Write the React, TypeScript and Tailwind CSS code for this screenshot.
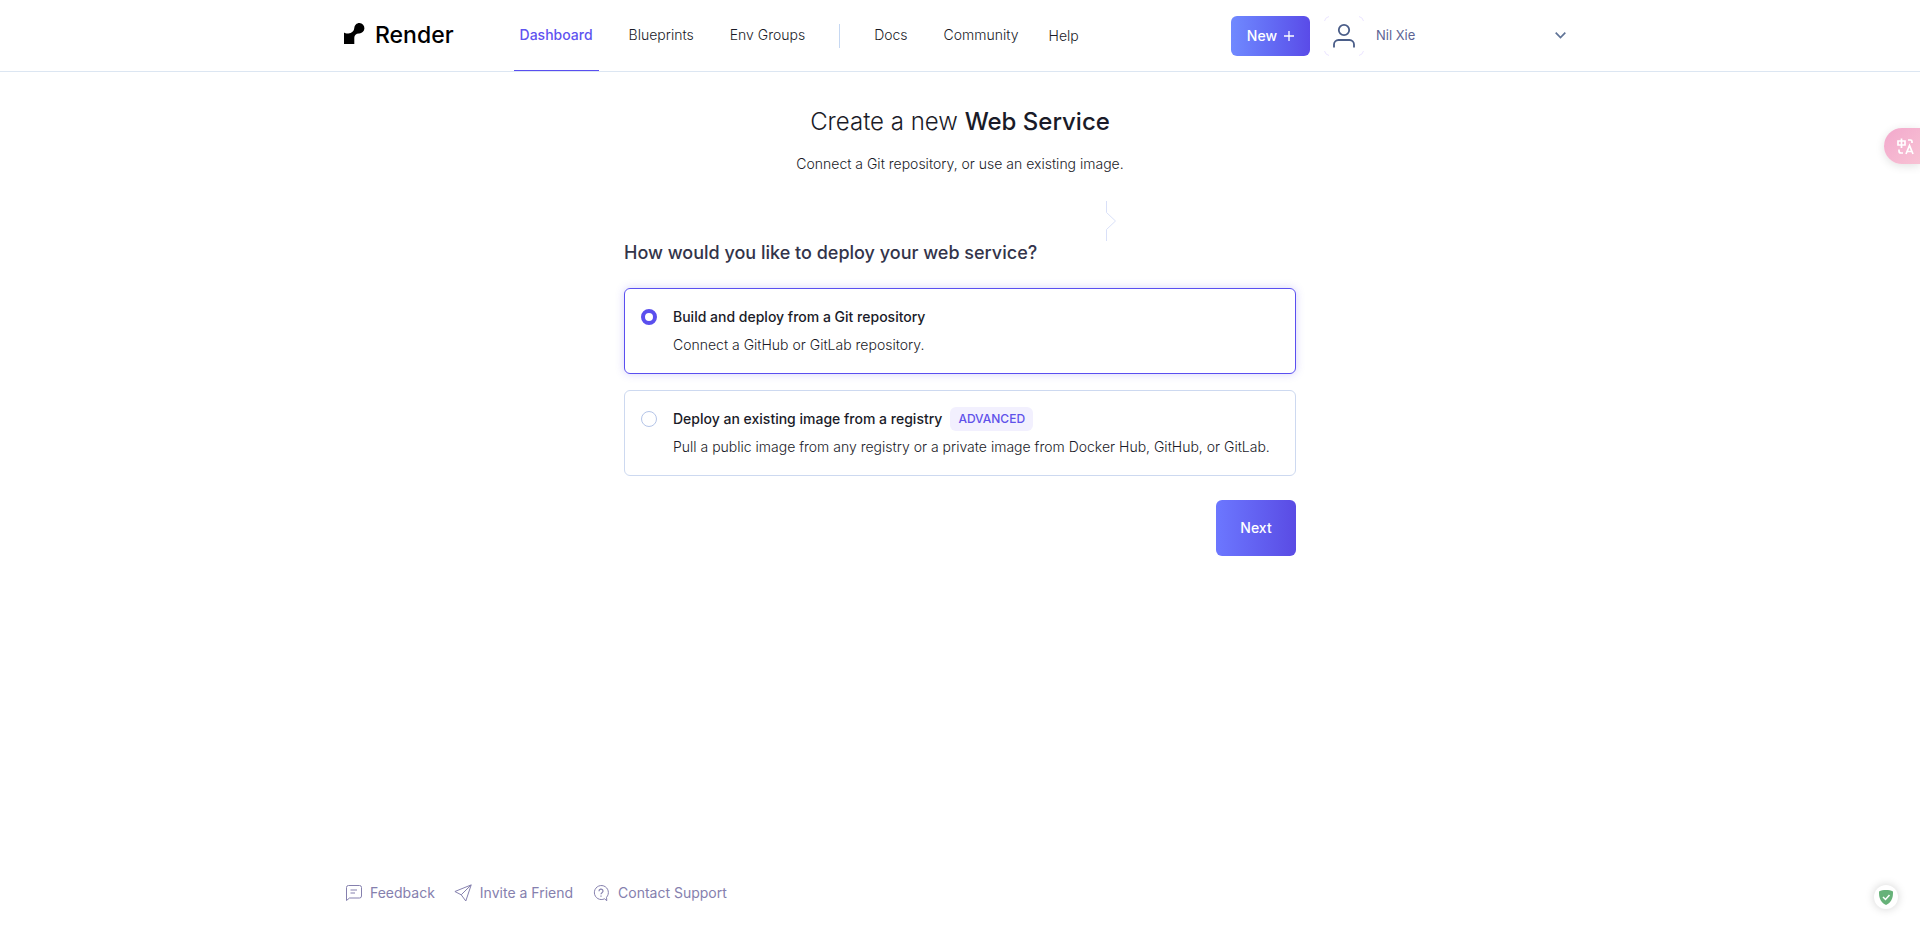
import { useState } from "react";

type Option = {
  id: string;
  title: string;
  detail: string;
  badge?: string;
};

const options: Option[] = [
  {
    id: "git",
    title: "Build and deploy from a Git repository",
    detail: "Connect a GitHub or GitLab repository.",
  },
  {
    id: "image",
    title: "Deploy an existing image from a registry",
    detail:
      "Pull a public image from any registry or a private image from Docker Hub, GitHub, or GitLab.",
    badge: "ADVANCED",
  },
];

function Logo() {
  return (
    <a href="#" className="flex items-center gap-2.5 pb-0.5 text-black">
      <svg className="mb-0.5" width="21" height="21" viewBox="0 0 21 21" fill="currentColor" aria-hidden="true">
        <path d="M15.500 0a5.200 5.200 0 1 1-.6 10.400c-2.800.1-4.600 1.600-4.600 4.300V21H0V9.500c1.200.9 2.500 1.100 4.300 1C7.800 10.300 10 8.200 10.300 5 10.500 2.200 12.600 0 15.500 0z" />
      </svg>
      <span className="text-[23px] leading-8 font-medium">Render</span>
    </a>
  );
}

function NavLink({ label, active }: { label: string; active?: boolean }) {
  return (
    <a
      href="#"
      className={
        active
          ? "flex h-[71px] items-center border-b border-[#5a4ff0] px-1.5 font-medium text-[#5f54f0]"
          : "flex h-[71px] items-center border-b border-transparent px-1.5"
      }
    >
      {label}
    </a>
  );
}

function Header() {
  return (
    <header className="border-b border-[#dce6f2]">
      <div className="mx-auto flex h-[71px] max-w-7xl items-center px-6">
        <Logo />
        <nav className="ml-15 flex items-center gap-6 text-sm font-light">
          <NavLink label="Dashboard" active />
          <NavLink label="Blueprints" />
          <NavLink label="Env Groups" />
          <span className="mx-1 h-6 w-px bg-[#c6d8f2]" />
          <NavLink label="Docs" />
          <NavLink label="Community" />
          <button type="button">Help</button>
        </nav>
        <div className="ml-auto flex items-center">
          <button
            type="button"
            className="flex h-10 items-center gap-[7px] rounded-md bg-linear-to-r from-[#7089ff] via-[#636bf4] to-[#5a4be8] px-4 text-sm font-medium text-white"
          >
            New
            <svg width="10" height="10" viewBox="0 0 10 10" stroke="currentColor" strokeWidth="1.300" aria-hidden="true">
              <path d="M5 0v10M0 5h10" />
            </svg>
          </button>
          <button type="button" className="ml-3.5 flex w-[252px] items-center text-[13px] text-[#5d6394]">
            <svg width="40" height="40" viewBox="0 0 40 40" fill="none" aria-hidden="true">
              <path
                d="M.5 5A6 6 0 0 1 5 .5M35 .5A6 6 0 0 1 39.500 5M39.500 35a6 6 0 0 1-4.500 4.500M5 39.500A6 6 0 0 1 .5 35"
                stroke="#ebe5ff"
              />
              <g stroke="#4a5d88" strokeWidth="1.800">
                <circle cx="20" cy="14" r="5.200" />
                <path d="M10 31.500v-3a4.500 4.500 0 0 1 4.500-4.500h11a4.500 4.500 0 0 1 4.500 4.500v3" />
              </g>
            </svg>
            <span className="ml-3">Nil Xie</span>
            <svg className="mr-2.5 ml-auto" width="11" height="7" viewBox="0 0 11 7" fill="none" stroke="#5f7396" strokeWidth="1.700" aria-hidden="true">
              <path d="M.7.7l4.800 4.800L10.300.7" />
            </svg>
          </button>
        </div>
      </div>
    </header>
  );
}

function OptionCard({
  option,
  selected,
  onSelect,
}: {
  option: Option;
  selected: boolean;
  onSelect: () => void;
}) {
  return (
    <label
      htmlFor={option.id}
      className={
        selected
          ? "flex gap-4 rounded-md border border-[#5a4ff0] px-4 py-3.5 shadow-[0_0_8px_rgba(90,79,240,0.25)]"
          : "flex gap-4 rounded-md border border-[#cdd9f0] px-4 py-3.5"
      }
    >
      <input
        id={option.id}
        type="radio"
        name="source"
        checked={selected}
        onChange={onSelect}
        className="mt-1.5 size-4 shrink-0 appearance-none rounded-full border border-[#b5c5e8] bg-white checked:border-4 checked:border-[#5a4fee]"
      />
      <span className="text-sm leading-7">
        <span className="flex items-center gap-2 font-medium">
          {option.title}
          {option.badge && (
            <span className="rounded-md bg-[#f2f0fe] px-2 text-xs leading-6 text-[#5f52ea]">
              {option.badge}
            </span>
          )}
        </span>
        <span className="block font-light">{option.detail}</span>
      </span>
    </label>
  );
}

function Footer() {
  return (
    <footer className="mx-auto flex w-full max-w-7xl items-center gap-[19px] px-6 pb-[31px] text-sm leading-5 text-[#8580ae]">
      <a href="#" className="flex items-center gap-2">
        <svg width="18" height="18" viewBox="0 0 18 18" fill="none" stroke="currentColor" aria-hidden="true">
          <path d="M2.500 16.500V3.500a2 2 0 0 1 2-2h11a2 2 0 0 1 2 2v8.500a2 2 0 0 1-2 2H5.500zM6.500 6h6.500M6.500 9h4.500" />
        </svg>
        Feedback
      </a>
      <a href="#" className="flex items-center gap-2">
        <svg width="18" height="18" viewBox="0 0 18 18" fill="none" stroke="currentColor" strokeLinejoin="round" aria-hidden="true">
          <path d="M17.200.9L.9 7.500l6.300 3.300L11.800 17zM17.200.9L7.200 10.800" />
        </svg>
        Invite a Friend
      </a>
      <a href="#" className="flex items-center gap-2">
        <svg width="18" height="18" viewBox="0 0 18 18" fill="none" stroke="currentColor" aria-hidden="true">
          <path d="M12.500 14.800a7 7 0 1 1 2-1.500l.3 3.400z" strokeLinejoin="round" />
          <path d="M7 7.200a2 2 0 1 1 3 1.600c-.7.4-1 .7-1 1.500M9 11.500v1.200" strokeWidth="1.200" />
        </svg>
        Contact Support
      </a>
    </footer>
  );
}

export default function App() {
  const [source, setSource] = useState("git");
  return (
    <div className="flex min-h-screen flex-col bg-white font-['Inter',sans-serif] text-[#1a1b28]">
      <Header />
      <main className="mx-auto w-full max-w-2xl grow pt-9">
        <h1 className="text-center text-2xl leading-7 font-light">
          Create a new <span className="font-medium">Web Service</span>
        </h1>
        <p className="mt-[18px] text-center text-sm leading-5 font-light">
          Connect a Git repository, or use an existing image.
        </p>
        <svg className="mt-[27px] mr-45 ml-auto" width="11" height="40" viewBox="0 0 11 40" fill="none" stroke="#d9e0f8" aria-hidden="true">
          <path d="M1.500 0v11.500l9 8.500-9 8.500V40" />
        </svg>
        <h2 className="text-lg leading-6 font-medium text-[#33344a]">
          How would you like to deploy your web service?
        </h2>
        <div className="mt-[23px] flex flex-col gap-4">
          {options.map((option) => (
            <OptionCard
              key={option.id}
              option={option}
              selected={source === option.id}
              onSelect={() => setSource(option.id)}
            />
          ))}
        </div>
        <button
          type="button"
          className="mt-6 ml-auto block h-14 w-20 rounded-md bg-linear-to-r from-[#6c77ff] to-[#5a4be4] text-sm font-medium text-white"
        >
          Next
        </button>
      </main>
      <Footer />
      <button
        type="button"
        aria-label="Translate"
        className="fixed top-32 right-0 flex h-9 w-9 items-center justify-end rounded-l-full bg-linear-to-br from-[#f2a8cc] to-[#f8c2d4] pr-1.5 shadow-[0_2px_10px_rgba(0,0,0,0.12)]"
      >
        <svg width="17" height="17" viewBox="0 0 17 17" fill="none" stroke="#fff" strokeWidth="1.700" aria-hidden="true">
          <path d="M1 3h7v4H1zM4.500.5v9.500M11 2h2.500a1.500 1.500 0 0 1 1.500 1.500V5M2 11.500V13a2 2 0 0 0 2 2h2M9 16l3.500-8.500L16 16M10.300 13.500h4.400" />
        </svg>
      </button>
      <button
        type="button"
        aria-label="Protection"
        className="fixed right-[22px] bottom-[25px] flex size-6 items-center justify-center rounded-full bg-white shadow-[0_0_10px_rgba(0,0,0,0.18)]"
      >
        <svg width="14" height="15" viewBox="0 0 14 15" aria-hidden="true">
          <path d="M7 0c2.500 0 5 .5 7 1.400 0 5-.3 10-7 13.600C.3 11.400 0 6.400 0 1.400 2 .5 4.500 0 7 0z" fill="#67b279" />
          <path d="M4 7l2.500 2.500L10.500 5" fill="none" stroke="#fff" strokeWidth="1.500" />
        </svg>
      </button>
    </div>
  );
}
